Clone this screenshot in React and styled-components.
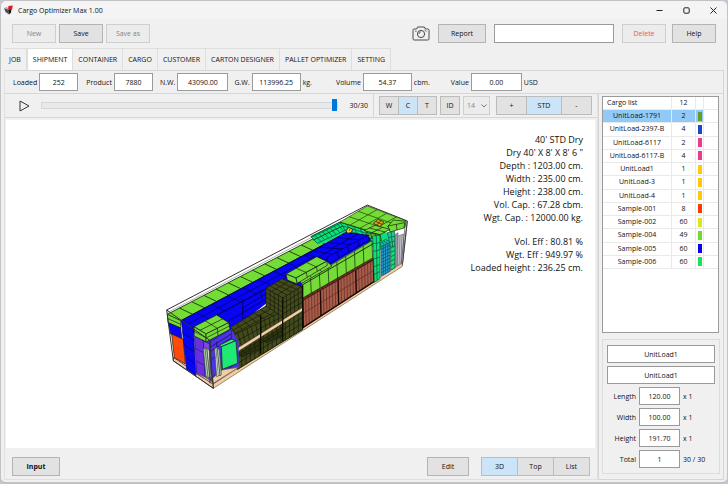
import { useState } from 'react';
import styled, { createGlobalStyle } from 'styled-components';

const GlobalStyle = createGlobalStyle`
  * {
    box-sizing: border-box;
  }

  body {
    margin: 0;
    background: #c4c8ce;
  }

  body, button, input, select {
    font-family: 'Open Sans', 'Noto Sans', sans-serif;
    font-size: 7px;
    color: #111;
  }
`;

const Window = styled.div`
  display: flex;
  flex-direction: column;
  min-height: 100vh;
  background: #f0f0f0;
  border: 1px solid #c2c2c2;
  border-bottom-width: 2px;
  border-radius: 6px;
  padding: 0 3px 2px;
`;

const TitleBar = styled.header`
  display: flex;
  align-items: center;
  gap: 4px;
  height: 18px;
  padding: 0 0 0 2px;
  margin: 0 -3px;
  background: #f4f4f4;
  border-radius: 6px 6px 0 0;
`;

const Title = styled.h1`
  flex: 1;
  margin: 0;
  font-size: 7px;
  font-weight: 400;
`;

const WindowButtons = styled.div`
  display: flex;
`;

const WindowButton = styled.button`
  display: flex;
  align-items: center;
  justify-content: center;
  width: 27px;
  height: 16px;
  padding: 0;
  border: none;
  background: none;
`;

const Toolbar = styled.div`
  display: flex;
  align-items: center;
  justify-content: space-between;
  padding: 5px 8px;
`;

const ToolGroup = styled.div`
  display: flex;
  align-items: center;
  gap: ${(props) => props.$gap}px;
`;

const Spacer = styled.div`
  flex: 1;
`;

const Button = styled.button`
  width: ${(props) => props.$width || 44}px;
  height: 19px;
  padding: 0;
  border: 1px solid #b4b4b4;
  background: #e2e2e2;
  font-weight: ${(props) => (props.$bold ? 700 : 400)};

  &:disabled {
    border-color: #cfcfcf;
    background: #ececec;
    color: ${(props) => (props.$danger ? '#f05555' : '#858585')};
  }
`;

const IconButton = styled.button`
  display: flex;
  align-items: center;
  justify-content: center;
  padding: 0;
  border: none;
  background: none;
`;

const SearchInput = styled.input`
  width: 120px;
  height: 19px;
  border: 1px solid #9a9a9a;
  background: #fff;
`;

const TabList = styled.nav`
  display: flex;
  height: 22px;
`;

const Tab = styled.button`
  padding: 0 5px;
  border: 1px solid #dedede;
  border-bottom: none;
  border-left-width: ${(props) => (props.$active ? 1 : 0)}px;
  background: ${(props) => (props.$active ? '#fff' : '#f0f0f0')};
`;

const Stats = styled.section`
  display: flex;
  align-items: center;
  height: 24px;
  padding-left: 8px;
  border: 1px solid #d6d6d6;
  border-left-color: #e2e2e2;
`;

const Stat = styled.div`
  display: flex;
  align-items: center;
  gap: 2px;
  margin-right: ${(props) => props.$gap}px;
`;

const Field = styled.input`
  width: ${(props) => props.$width}px;
  height: 18px;
  padding: 0;
  border: 1px solid #9a9a9a;
  background: #fff;
  text-align: center;
`;

const Main = styled.main`
  display: flex;
  flex: 1;
`;

const Viewer = styled.section`
  display: flex;
  flex-direction: column;
  flex: 1;
  border: 1px solid #e0e0e0;
  border-width: 0 1px 1px;
`;

const Controls = styled.div`
  display: flex;
  align-items: center;
  height: 24px;
  padding: 0 5px 0 14px;
  border-bottom: 1px solid #d6d6d6;
`;

const Slider = styled.input`
  flex: 1;
  appearance: none;
  height: 13px;
  margin: 0 11px;
  background: none;

  &::-webkit-slider-runnable-track {
    height: 7px;
    border: 1px solid #d6d6d6;
    background: #e7eaea;
  }

  &::-webkit-slider-thumb {
    appearance: none;
    width: 5px;
    height: 12px;
    margin-top: -4px;
    background: #0078d7;
  }
`;

const Progress = styled.span`
  display: flex;
  align-items: center;
  align-self: stretch;
  padding-right: 5px;
  margin-right: 5px;
  border-right: 1px solid #d6d6d6;
`;

const Segments = styled.div`
  display: flex;
  margin-right: ${(props) => props.$gap || 0}px;
`;

const Segment = styled.button`
  width: ${(props) => props.$width}px;
  height: 19px;
  padding: 0;
  border: 1px solid #bcbcbc;
  background: ${(props) => (props.$active ? '#cce4f7' : '#e2e2e2')};

  & + & {
    margin-left: -1px;
  }
`;

const SelectBox = styled.div`
  display: grid;
  align-items: center;
  margin: 0 6px 0 3px;

  select, svg {
    grid-area: 1 / 1;
  }

  svg {
    justify-self: end;
    margin-right: 3px;
    z-index: 1;
    pointer-events: none;
  }
`;

const Select = styled.select`
  appearance: none;
  width: 27px;
  height: 19px;
  padding: 0 3px;
  border: 1px solid #cfcfcf;
  border-radius: 0;
  background: #ececec;
  color: #858585;
  opacity: 1;
`;

const Canvas = styled.div`
  display: flex;
  flex: 1;
  align-items: flex-start;
  margin: 2px 2px 0 1px;
  padding: 13px 12px 0 154px;
  background: #fff;
`;

const Drawing = styled.svg`
  flex: none;
  width: 250px;
  height: 192px;
  margin-top: 67px;
`;

const Summary = styled.div`
  flex: 1;
  font-size: 9px;
  line-height: 13px;
  text-align: right;
  white-space: nowrap;

  p {
    margin: 0 0 11px;
  }
`;

const BottomBar = styled.div`
  display: flex;
  align-items: center;
  padding: 9px 7px 3px;
`;

const Sidebar = styled.aside`
  display: flex;
  flex-direction: column;
  gap: 6px;
  width: 126px;
  padding: 2px 4px 5px 3px;
  border: 1px solid #d6d6d6;
  border-width: 0 1px 1px;
`;

const ListBox = styled.div`
  flex: 1;
  border: 1px solid #9a9a9a;
  background: #fff;
`;

const CargoTable = styled.table`
  width: 100%;
  height: 172px;
  border-collapse: separate;
  border-spacing: 0;
  table-layout: fixed;

  th, td {
    height: 13px;
    padding: 0;
    border: 1px solid #e9e9e9;
    border-width: 0 1px 1px 0;
    font-weight: 400;
    line-height: 12px;
    text-align: center;
  }

  th:first-child {
    padding-left: 4px;
    text-align: left;
  }

  td:last-child, th:last-child {
    border-right: none;
  }
`;

const Row = styled.tr`
  background: ${(props) => (props.$selected ? '#91c9f7' : '#fff')};

  td:nth-child(n + 4) {
    background: #fff;
  }
`;

const Swatch = styled.span`
  display: block;
  width: 4px;
  height: 9px;
  margin: 0 auto;
  background: ${(props) => props.$color};
`;

const Details = styled.fieldset`
  display: flex;
  flex-direction: column;
  gap: 3px;
  margin: 0;
  padding: 5px 4px;
  border: 1px solid #dcdcdc;
`;

const DetailRow = styled.div`
  display: grid;
  grid-template-columns: 29px 41px 1fr;
  align-items: center;
  column-gap: 3px;

  label {
    text-align: right;
  }
`;

const lerp = (a, b, t) => [a[0] + (b[0] - a[0]) * t, a[1] + (b[1] - a[1]) * t];

// A four-cornered face (top left, top right, bottom right, bottom left) cut into cells
const Face = ({ points, fill, cols = 1, rows = 1, line = 2, stroke = '#151515' }) => {
  const p = points.split(' ').map((pair) => pair.split(',').map(Number));
  let d = '';
  for (let i = 1; i < cols; i++) {
    const a = lerp(p[0], p[1], i / cols);
    const b = lerp(p[3], p[2], i / cols);
    d += `M${a}L${b}`;
  }
  for (let i = 1; i < rows; i++) {
    const a = lerp(p[0], p[3], i / rows);
    const b = lerp(p[1], p[2], i / rows);
    d += `M${a}L${b}`;
  }
  return (
    <g stroke={stroke} strokeWidth={line} strokeLinejoin="round">
      <polygon points={points} fill={fill} />
      <path d={d} fill="none" />
    </g>
  );
};

const GREEN = '#74dc36';
const BLUE = '#0804f4';
const OLIVE = '#434b1c';
const SPRING = '#0ce07c';
const TAN = '#f0cfa6';
const BROWN = '#a95c4a';

const LoadDrawing = () => (
  <Drawing viewBox="0 0 750 576" role="img" aria-label="Loaded container">
    {/* container floor and far edges */}
    <path d="M20 330L622 15L742 63L727 195" fill="none" stroke="#333" strokeWidth="3" />
    <path d="M22 338L622 25" fill="none" stroke="#888" strokeWidth="2" />
    <Face points="40,472 160,553 160,565 40,483" fill={TAN} />
    <Face points="160,552 727,189 727,199 160,565" fill={TAN} stroke="#6c543a" />

    {/* left row */}
    <Face points="22,343 460,116 495,132 62,362" fill={GREEN} cols={12} stroke="#24480e" line={3} />
    <Face points="22,343 62,362 62,384 24,368" fill={GREEN} rows={2} />
    <Face points="25,368 62,384 66,418 32,402" fill={BLUE} />
    <Face points="35,402 70,418 76,492 43,473" fill="#ff4a08" />

    {/* wall behind the blue block */}
    <polygon points="452,110 540,66 690,100 705,140 662,150 560,110 475,134" fill={SPRING} />
    <Face points="454,112 545,68 562,88 472,130" fill={SPRING} cols={8} stroke="#064a2a" />
    <Face points="540,66 640,98 645,116 555,90" fill={SPRING} cols={5} rows={2} stroke="#064a2a" />
    <path d="M452 110L540 66L640 98M460 120L548 78" fill="none" stroke="#064a2a" strokeWidth="3" />

    {/* blue block */}
    <polygon points="64,362 560,97 628,108 632,122 510,195 425,250 425,265 330,300 215,392 100,400" fill={BLUE} stroke="#03036a" strokeWidth="2" />
    <path d="M64 362L560 97M100 385L380 232M82 373L560 118M110 338L150 358M156 313L198 334M202 288L246 308M248 263L292 283M294 239L338 258M340 214L384 232M386 190L420 206M432 166L470 182M476 142L510 158" fill="none" stroke="#03036a" strokeWidth="2" />
    <Face points="64,362 100,385 108,527 80,508" fill={BLUE} rows={4} stroke="#03036a" />
    <path d="M170 345L372 238M200 366L318 298M248 298V345M300 270L308 300M246 325L318 282M248 320V355L262 350" fill="none" stroke="#02024a" strokeWidth="2" />

    {/* back of the container */}
    <Face points="540,66 622,18 738,62 660,103" fill={GREEN} cols={3} rows={4} stroke="#1c380a" />
    <Face points="640,70 654,58 672,66 660,80" fill="#d9a814" cols={2} rows={2} />
    <Face points="683,80 700,60 738,64 735,82" fill={GREEN} />
    <Face points="684,78 734,68 732,84 690,96" fill={GREEN} cols={2} />
    <Face points="612,92 645,76 690,88 660,104" fill={GREEN} cols={2} rows={2} />
    <Face points="618,98 660,104 664,122 622,112" fill="#5cc038" cols={3} />

    {/* raised blue cells */}
    <Face points="480,142 556,98 628,106 552,148" fill={BLUE} cols={3} rows={2} stroke="#02024a" />
    <Face points="440,164 480,142 560,148 506,182" fill={BLUE} cols={2} rows={2} stroke="#02024a" />
    <Face points="500,172 624,106 628,120 506,192" fill={BLUE} cols={4} stroke="#02024a" />
    <path d="M558 92L566 82L578 88L574 98L562 100Z" fill="#e8d820" stroke="#222" strokeWidth="3" />
    <circle cx="568" cy="90" r="2" fill="#222" />

    {/* right row, green over brown */}
    <Face points="425,248 636,122 638,178 428,298" fill={GREEN} cols={8} />
    <path d="M425 256L638 132" stroke="#1c380a" strokeWidth="3" />
    <Face points="378,222 470,170 500,184 408,234" fill={GREEN} cols={3} />
    <Face points="408,234 500,184 516,198 425,250" fill={GREEN} cols={3} />
    <Face points="378,222 408,234 412,252 382,240" fill={GREEN} />
    <Face points="408,234 500,184 502,196 412,250" fill={GREEN} cols={3} />
    <Face points="428,298 640,178 642,245 430,382" fill={BROWN} cols={24} rows={2} stroke="#5c2a20" />
    <Face points="428,298 640,178 642,245 430,382" fill="none" cols={4} stroke="#1c0a06" line={4} />
    <Face points="428,294 638,174 640,180 428,302" fill="#6a3226" cols={14} stroke="#351610" />

    {/* olive cartons */}
    <polygon points="212,382 318,318 368,340 428,322 428,390 232,510" fill={OLIVE} />
    <Face points="212,382 318,318 368,340 232,408" fill={OLIVE} cols={6} rows={3} stroke="#15180a" />
    <Face points="220,406 368,334 368,364 232,444" fill={OLIVE} cols={11} rows={2} stroke="#15180a" />
    <Face points="232,456 428,334 428,388 232,508" fill={OLIVE} cols={15} rows={3} stroke="#15180a" />
    <Face points="232,462 300,420 300,446 250,470" fill="#2c340f" cols={4} rows={2} stroke="#15180a" />
    <Face points="304,420 366,382 366,406 320,428" fill="#2c340f" cols={4} rows={2} stroke="#15180a" />
    <Face points="318,265 366,236 425,260 368,294" fill={OLIVE} cols={4} rows={3} stroke="#15180a" />
    <Face points="318,265 368,294 368,350 318,318" fill={OLIVE} cols={4} rows={4} stroke="#15180a" />
    <Face points="368,294 425,259 428,322 368,358" fill={OLIVE} cols={5} rows={4} stroke="#15180a" />
    <Face points="232,444 428,322 428,333 232,456" fill={TAN} stroke="#3a3020" />
    <path d="M302 345V462M368 292V424M428 256V386" stroke="#0c0e04" strokeWidth="4" />

    {/* front corner */}
    <polygon points="108,425 214,388 236,425 236,500 160,552 108,522" fill="#4a34e4" />
    <Face points="103,408 130,422 136,532 110,520" fill="#6a2fe0" rows={3} stroke="#231680" />
    <Face points="130,422 150,432 156,548 136,532" fill="#7a48e4" rows={3} stroke="#231680" />
    <Face points="150,425 214,388 216,500 154,532" fill="#4a34e4" rows={2} stroke="#231680" />
    <path d="M150 442L214 402M150 455L214 414M170 425V450" stroke="#231680" strokeWidth="3" />
    <Face points="102,380 170,345 206,368 138,402" fill={GREEN} cols={2} rows={2} />
    <Face points="102,380 138,402 138,425 103,408" fill={GREEN} rows={2} />
    <Face points="138,402 206,368 210,388 138,426" fill={GREEN} cols={2} rows={2} />
    <Face points="108,520 136,532 156,545 160,552" fill={TAN} stroke="#6c543a" />
    <Face points="158,535 186,510 236,502 160,550" fill={TAN} stroke="#6c543a" />
    <Face points="130,446 140,444 150,534 138,530" fill="#b9d6b4" cols={2} stroke="#3c4a3a" />
    <Face points="141,445 147,450 154,532 150,534" fill="#eef5e8" stroke="#3c4a3a" />
    <Face points="164,446 172,442 180,526 170,530" fill="#eef5e8" cols={2} stroke="#3c4a3a" />
    <Face points="172,444 178,450 184,524 180,528" fill="#b9d6b4" stroke="#3c4a3a" />
    <Face points="178,436 214,418 228,422 184,440" fill="#2cf484" />
    <Face points="184,440 228,422 233,490 187,508" fill="#1fe873" />
    <path d="M20 330L40 482L160 565L148 420ZM150 420V550" fill="none" stroke="#333" strokeWidth="3" />

    {/* rear right stack */}
    <Face points="638,108 660,106 660,236 643,247" fill={SPRING} rows={6} cols={2} stroke="#05522e" />
    <Face points="663,138 690,126 690,214 663,228" fill="#22a4d0" rows={9} cols={4} stroke="#0d4a6c" />
    <Face points="660,130 676,118 692,126 664,140" fill="#18b8a8" cols={3} stroke="#05522e" />
    <Face points="682,98 704,94 704,138 692,142" fill="#22c79a" rows={3} cols={2} stroke="#05522e" />
    <Face points="692,144 706,138 704,204 692,210" fill={SPRING} rows={5} stroke="#05522e" />
    <Face points="706,104 714,98 712,196 706,200" fill="#9a9aa2" stroke="#55555e" />
    <Face points="714,108 732,102 728,186 712,196" fill="#c9c9d2" cols={3} stroke="#6a6a74" />
    <path d="M742 63L727 195M735 80L724 190" fill="none" stroke="#444" strokeWidth="2" />
  </Drawing>
);

const CameraIcon = () => (
  <svg width="18" height="15" viewBox="0 0 18 15" fill="none" stroke="#4a4a4a">
    <path d="M1 4.2Q1 3 2.2 3H4.6L5.6 1H12.4L13.4 3H15.8Q17 3 17 4.2V12.8Q17 14 15.8 14H2.2Q1 14 1 12.8Z" />
    <circle cx="9" cy="8" r="3.6" />
    <path d="M6.8 8A2.2 2.2 0 0 1 9 5.8M3 5.2H4.6M12.5 4L14.5 5.5" strokeWidth="0.8" />
  </svg>
);

const tabs = ['JOB', 'SHIPMENT', 'CONTAINER', 'CARGO', 'CUSTOMER', 'CARTON DESIGNER', 'PALLET OPTIMIZER', 'SETTING'];

const stats = [
  { label: 'Loaded', value: '252', width: 39, gap: 8 },
  { label: 'Product', value: '7880', width: 39, gap: 7 },
  { label: 'N.W.', value: '43090.00', width: 51, gap: 6 },
  { label: 'G.W.', value: '113996.25', width: 49, gap: 24, unit: 'kg.' },
  { label: 'Volume', value: '54.37', width: 49, gap: 21, unit: 'cbm.' },
  { label: 'Value', value: '0.00', width: 51, gap: 0, unit: 'USD' },
];

const cargo = [
  ['UnitLoad-1791', 2, '#6a9a2a'],
  ['UnitLoad-2397-B', 4, '#1f46c8'],
  ['UnitLoad-6117', 2, '#ee3a8c'],
  ['UnitLoad-6117-B', 4, '#ee3a8c'],
  ['UnitLoad1', 1, '#ffc80a'],
  ['UnitLoad-3', 1, '#ffc80a'],
  ['UnitLoad-4', 1, '#ffc80a'],
  ['Sample-001', 8, '#ff3c00'],
  ['Sample-002', 60, '#dce61e'],
  ['Sample-004', 49, '#6edc28'],
  ['Sample-005', 60, '#0a00f0'],
  ['Sample-006', 60, '#14e65a'],
];

const details = [
  ['Length', '120.00', 'x 1'],
  ['Width', '100.00', 'x 1'],
  ['Height', '191.70', 'x 1'],
  ['Total', '1', '30 / 30'],
];

const App = () => {
  const [tab, setTab] = useState('SHIPMENT');
  const [mode, setMode] = useState('C');
  const [view, setView] = useState('3D');
  const [selected, setSelected] = useState(0);

  return (
    <>
      <GlobalStyle />
      <Window>
        <TitleBar>
          <svg width="11" height="11" viewBox="0 0 11 11">
            <path d="M1 3L5 4.5L6 9.5L2.5 7Z" fill="#4a5058" />
            <path d="M5 4.5L8.5 4L8 7.5L6 9.5Z" fill="#16181c" />
            <path d="M1 3L4 2L6 4.5Z" fill="#a4aab0" />
            <path d="M5.5 1L9.8 0.6L9 4.6L5 4.2Z" fill="#e01818" />
          </svg>
          <Title>Cargo Optimizer Max 1.00</Title>
          <WindowButtons>
            <WindowButton aria-label="Minimize">
              <svg width="7" height="7" viewBox="0 0 7 7"><path d="M0.5 3.5H6.5" stroke="#222" /></svg>
            </WindowButton>
            <WindowButton aria-label="Maximize">
              <svg width="7" height="7" viewBox="0 0 7 7"><rect x="0.8" y="0.8" width="5.4" height="5.4" rx="1" fill="none" stroke="#222" /></svg>
            </WindowButton>
            <WindowButton aria-label="Close">
              <svg width="7" height="7" viewBox="0 0 7 7"><path d="M0.5 0.5L6.5 6.5M6.5 0.5L0.5 6.5" stroke="#222" /></svg>
            </WindowButton>
          </WindowButtons>
        </TitleBar>

        <Toolbar>
          <ToolGroup $gap={3}>
            <Button disabled>New</Button>
            <Button>Save</Button>
            <Button disabled>Save as</Button>
          </ToolGroup>
          <ToolGroup $gap={8}>
            <IconButton aria-label="Take picture"><CameraIcon /></IconButton>
            <Button $width={48}>Report</Button>
            <SearchInput type="text" aria-label="Search" />
            <ToolGroup $gap={6}>
              <Button disabled $danger>Delete</Button>
              <Button>Help</Button>
            </ToolGroup>
          </ToolGroup>
        </Toolbar>

        <TabList>
          {tabs.map((name) => (
            <Tab key={name} $active={tab === name} onClick={() => setTab(name)}>{name}</Tab>
          ))}
        </TabList>

        <Stats>
          {stats.map(({ label, value, width, gap, unit }) => (
            <Stat key={label} $gap={gap}>
              <label htmlFor={label}>{label}</label>
              <Field id={label} $width={width} defaultValue={value} />
              {unit && <span>{unit}</span>}
            </Stat>
          ))}
        </Stats>

        <Main>
          <Viewer>
            <Controls>
              <IconButton aria-label="Play">
                <svg width="11" height="12" viewBox="0 0 11 12">
                  <path d="M1 1L10 6L1 11Z" fill="none" stroke="#333" />
                </svg>
              </IconButton>
              <Slider type="range" min="0" max="30" defaultValue="30" aria-label="Step" />
              <Progress>30/30</Progress>
              <Segments $gap={3}>
                {['W', 'C', 'T'].map((name) => (
                  <Segment key={name} $width={20} $active={mode === name} onClick={() => setMode(name)}>{name}</Segment>
                ))}
              </Segments>
              <Segment $width={20}>ID</Segment>
              <SelectBox>
                <Select aria-label="Text size" disabled defaultValue="14">
                  <option>14</option>
                </Select>
                <svg width="6" height="4" viewBox="0 0 6 4">
                  <path d="M0.5 0.5L3 3L5.5 0.5" fill="none" stroke="#777" />
                </svg>
              </SelectBox>
              <Segments>
                <Segment $width={31}>+</Segment>
                <Segment $width={36} $active>STD</Segment>
                <Segment $width={31}>-</Segment>
              </Segments>
            </Controls>

            <Canvas>
              <LoadDrawing />
              <Summary>
                <p>
                  40' STD Dry<br />
                  Dry 40' X 8' X 8' 6 "<br />
                  Depth : 1203.00 cm.<br />
                  Width : 235.00 cm.<br />
                  Height : 238.00 cm.<br />
                  Vol. Cap. : 67.28 cbm.<br />
                  Wgt. Cap. : 12000.00 kg.
                </p>
                <p>
                  Vol. Eff : 80.81 %<br />
                  Wgt. Eff : 949.97 %<br />
                  Loaded height : 236.25 cm.
                </p>
              </Summary>
            </Canvas>

            <BottomBar>
              <Button $width={48} $bold>Input</Button>
              <Spacer />
              <Segments $gap={12}>
                <Button $width={42}>Edit</Button>
              </Segments>
              <Segments>
                {['3D', 'Top', 'List'].map((name) => (
                  <Segment key={name} $width={37} $active={view === name} onClick={() => setView(name)}>{name}</Segment>
                ))}
              </Segments>
            </BottomBar>
          </Viewer>

          <Sidebar>
            <ListBox>
              <CargoTable>
                <colgroup>
                  <col />
                  <col width="24" />
                  <col width="8" />
                  <col width="14" />
                </colgroup>
                <thead>
                  <tr>
                    <th>Cargo list</th>
                    <th>12</th>
                    <th />
                    <th />
                  </tr>
                </thead>
                <tbody>
                  {cargo.map(([name, count, color], i) => (
                    <Row key={name} $selected={i === selected} onClick={() => setSelected(i)}>
                      <td>{name}</td>
                      <td>{count}</td>
                      <td><Swatch $color={color} /></td>
                      <td />
                    </Row>
                  ))}
                </tbody>
              </CargoTable>
            </ListBox>

            <Details>
              <Field $width={108} aria-label="Cargo name" defaultValue="UnitLoad1" />
              <Field $width={108} aria-label="Cargo code" defaultValue="UnitLoad1" />
              {details.map(([label, value, note]) => (
                <DetailRow key={label}>
                  <label htmlFor={label}>{label}</label>
                  <Field id={label} $width={41} defaultValue={value} />
                  <span>{note}</span>
                </DetailRow>
              ))}
            </Details>
          </Sidebar>
        </Main>
      </Window>
    </>
  );
};

export default App;
